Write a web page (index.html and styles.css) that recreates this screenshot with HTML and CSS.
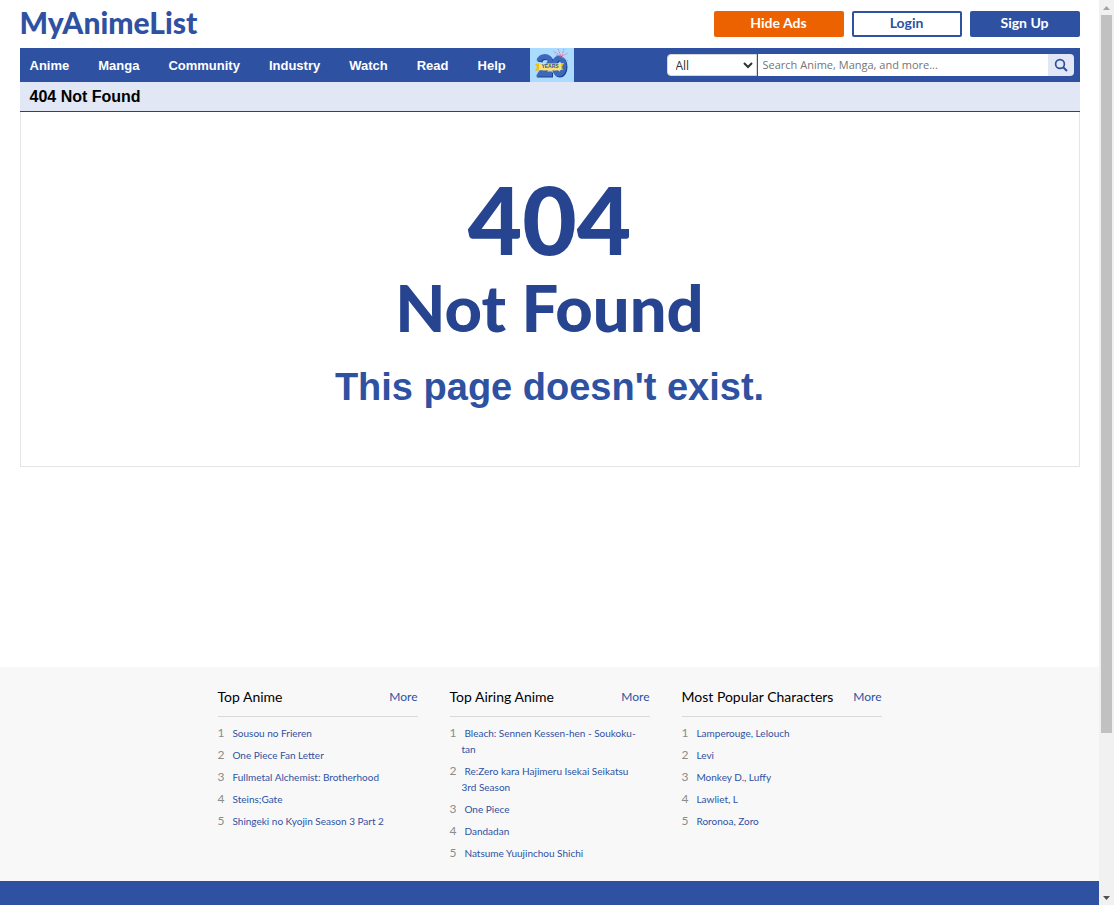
FILE: index.html
```
<!DOCTYPE html>
<html lang="en">
<head>
    <meta charset="UTF-8">
    <meta name="viewport" content="width=device-width, initial-scale=1.0">
    <title>404 Not Found - MyAnimeList.net</title>
    <link rel="stylesheet" href="styles.css">
</head>
<body>
    <div class="page">
        <!-- Logo and account buttons -->
        <header class="header wrapper">
            <a href="#" class="logo">MyAnimeList</a>
            <div class="header-buttons">
                <button type="button" class="btn btn-ads">Hide Ads</button>
                <button type="button" class="btn btn-login">Login</button>
                <button type="button" class="btn btn-signup">Sign Up</button>
            </div>
        </header>

        <!-- Menu -->
        <div class="menu wrapper">
            <nav class="nav">
                <a href="#">Anime</a>
                <a href="#">Manga</a>
                <a href="#">Community</a>
                <a href="#">Industry</a>
                <a href="#">Watch</a>
                <a href="#">Read</a>
                <a href="#">Help</a>
            </nav>
            <a href="#" class="anniversary" aria-label="20 years">
                <svg width="44" height="34" viewBox="0 0 44 34">
                    <g fill="none" stroke="#243f83" stroke-width="5">
                        <path d="M10 14C11 8 21 8 21 14C21 18 14 21 11 27H23"/>
                        <ellipse cx="30" cy="19" rx="5" ry="8"/>
                    </g>
                    <g fill="none" stroke="#3c68bd" stroke-width="5">
                        <path d="M9 13C10 7 20 7 20 13C20 17 13 20 10 26H22"/>
                        <ellipse cx="29" cy="18" rx="5" ry="8"/>
                    </g>
                    <path d="M5 16L11 15V22L5 23L7 19ZM28 15L34 15L32 19L33 22L28 22Z" fill="#eebf12"/>
                    <path d="M9 15Q20 16 31 15V22Q20 23 9 22Z" fill="#fbe16d"/>
                    <text x="20" y="20" class="anniversary-text">YEARS</text>
                    <g stroke="#e9799f" stroke-width="1" stroke-dasharray="2 1">
                        <path d="M31 8L23 3M31 8L28 1M32 8L34 1M32 8L38 5M32 9L38 13M31 8L25 7"/>
                    </g>
                </svg>
            </a>
            <form class="search">
                <select class="search-type" aria-label="Category">
                    <option>All</option>
                    <option>Anime</option>
                    <option>Manga</option>
                    <option>Characters</option>
                </select>
                <input type="text" class="search-input" placeholder="Search Anime, Manga, and more..." aria-label="Search">
                <button type="submit" class="search-btn" aria-label="Search">
                    <svg width="14" height="14" viewBox="0 0 14 14" fill="none" stroke="#2e51a2">
                        <circle cx="6" cy="6" r="4.4" stroke-width="1.7"/>
                        <path d="M9.2 9.2L13 13" stroke-width="2"/>
                    </svg>
                </button>
            </form>
        </div>

        <!-- Content -->
        <main class="content wrapper">
            <h1 class="title">404 Not Found</h1>
            <div class="error">
                <div class="error-code">404</div>
                <div class="error-name">Not Found</div>
                <p class="error-text">This page doesn't exist.</p>
            </div>
        </main>

        <!-- Rankings -->
        <section class="rankings">
            <div class="ranking">
                <div class="ranking-head">
                    <h2>Top Anime</h2>
                    <a href="#">More</a>
                </div>
                <ol>
                    <li><span>1</span><a href="#">Sousou no Frieren</a></li>
                    <li><span>2</span><a href="#">One Piece Fan Letter</a></li>
                    <li><span>3</span><a href="#">Fullmetal Alchemist: Brotherhood</a></li>
                    <li><span>4</span><a href="#">Steins;Gate</a></li>
                    <li><span>5</span><a href="#">Shingeki no Kyojin Season 3 Part 2</a></li>
                </ol>
            </div>
            <div class="ranking">
                <div class="ranking-head">
                    <h2>Top Airing Anime</h2>
                    <a href="#">More</a>
                </div>
                <ol>
                    <li><span>1</span><a href="#">Bleach: Sennen Kessen-hen - Soukoku-tan</a></li>
                    <li><span>2</span><a href="#">Re:Zero kara Hajimeru Isekai Seikatsu 3rd Season</a></li>
                    <li><span>3</span><a href="#">One Piece</a></li>
                    <li><span>4</span><a href="#">Dandadan</a></li>
                    <li><span>5</span><a href="#">Natsume Yuujinchou Shichi</a></li>
                </ol>
            </div>
            <div class="ranking">
                <div class="ranking-head">
                    <h2>Most Popular Characters</h2>
                    <a href="#">More</a>
                </div>
                <ol>
                    <li><span>1</span><a href="#">Lamperouge, Lelouch</a></li>
                    <li><span>2</span><a href="#">Levi</a></li>
                    <li><span>3</span><a href="#">Monkey D., Luffy</a></li>
                    <li><span>4</span><a href="#">Lawliet, L</a></li>
                    <li><span>5</span><a href="#">Roronoa, Zoro</a></li>
                </ol>
            </div>
        </section>

        <footer class="footer"></footer>
    </div>

    <!-- Scrollbar -->
    <div class="scrollbar" aria-hidden="true">
        <svg width="15" height="15" viewBox="0 0 15 15"><path d="M4 10L7.500 6L11 10Z" fill="#a3a3a3"/></svg>
        <div class="scrollbar-track"><div class="scrollbar-thumb"></div></div>
        <svg width="15" height="15" viewBox="0 0 15 15"><path d="M4 6L7.500 10L11 6Z" fill="#505050"/></svg>
    </div>
</body>
</html>
```
FILE: styles.css
```
/* Reset and Base Styles */
* {
    margin: 0;
    padding: 0;
    box-sizing: border-box;
}
body {
    display: flex;
    min-height: 100vh;
    background-color: #fff;
    color: #000;
    font-family: "Liberation Sans", Arial, sans-serif;
}
a {
    color: #2e51a2;
    text-decoration: none;
}
.page {
    display: flex;
    flex-direction: column;
    flex: 1;
}
.wrapper {
    width: calc(100% - 39px);
    max-width: 1060px;
    margin: 0 auto;
}

/* Header */
.header {
    display: flex;
    justify-content: space-between;
    align-items: center;
    height: 48px;
}
.logo {
    font-family: Lato, sans-serif;
    font-size: 30px;
    font-weight: 900;
    line-height: 40px;
    padding-bottom: 4px;
}
.header-buttons {
    display: flex;
    gap: 8px;
}
.btn {
    width: 110px;
    height: 26px;
    padding-bottom: 2px;
    border: 2px solid #2e51a2;
    border-radius: 2px;
    background-color: #2e51a2;
    color: #fff;
    font-family: Lato, sans-serif;
    font-size: 14px;
    font-weight: bold;
    line-height: 20px;
    cursor: pointer;
}
.btn-ads {
    width: 130px;
    border-color: #ec6200;
    background-color: #ec6200;
}
.btn-login {
    background-color: #fff;
    color: #2e51a2;
}

/* Menu */
.menu {
    display: flex;
    align-items: center;
    height: 34px;
    padding-right: 6px;
    background-color: #2e51a2;
}
.nav {
    display: flex;
    gap: 29px;
    padding: 2px 24px 0 10px;
}
.nav a {
    color: #fff;
    font-size: 13px;
    font-weight: bold;
    line-height: 32px;
}
.anniversary {
    display: flex;
    background-color: #abdcff;
}
.anniversary-text {
    fill: #2e51a2;
    font-family: "Liberation Sans", Arial, sans-serif;
    font-size: 5px;
    font-weight: bold;
    text-anchor: middle;
}
.search {
    display: flex;
    width: 407px;
    height: 22px;
    margin-left: auto;
}
.search-type {
    width: 90px;
    margin-right: 1px;
    padding-left: 4px;
    border: 1px solid #d8d8d8;
    border-radius: 4px 0 0 4px;
    background-color: #fff;
    color: #323232;
    font-family: "Open Sans", sans-serif;
    font-size: 12px;
}
.search-input {
    flex: 1;
    min-width: 0;
    padding: 0 5px 2px;
    border: none;
    font-family: "Open Sans", sans-serif;
    font-size: 11px;
}
.search-input::placeholder {
    color: #757575;
}
.search-btn {
    display: flex;
    align-items: center;
    justify-content: center;
    width: 26px;
    border: none;
    border-radius: 0 4px 4px 0;
    background-color: #e1e7f5;
    cursor: pointer;
}

/* Content */
.title {
    padding: 0 10px;
    border-bottom: 1px solid #1c439b;
    background-color: #e1e7f5;
    font-size: 16px;
    line-height: 29px;
}
.error {
    min-height: 355px;
    padding-top: 52px;
    border: 1px solid #e5e5e5;
    border-top: none;
    text-align: center;
}
.error-code,
.error-name {
    color: #26448f;
    font-family: Lato, sans-serif;
    font-weight: 900;
}
.error-code {
    font-size: 94px;
    line-height: 110px;
}
.error-name {
    font-size: 65px;
    line-height: 66px;
}
.error-text {
    padding-top: 24px;
    color: #2e51a2;
    font-size: 38px;
    font-weight: bold;
    line-height: 46px;
}

/* Rankings */
.rankings {
    display: flex;
    justify-content: center;
    gap: 32px;
    min-height: 214px;
    margin-top: 200px;
    padding: 20px 0 12px;
    background-color: #f8f8f8;
    font-family: Lato, sans-serif;
}
.ranking {
    width: 200px;
}
.ranking-head {
    display: flex;
    justify-content: space-between;
    height: 30px;
    margin-bottom: 8px;
    border-bottom: 1px solid #d8d8d8;
    line-height: 20px;
}
.ranking-head h2 {
    font-size: 14px;
    font-weight: normal;
}
.ranking-head a {
    font-size: 12px;
}
.ranking ol {
    padding-right: 8px;
    list-style: none;
}
.ranking li {
    margin-bottom: 6px;
    padding-left: 12px;
    font-size: 10px;
    line-height: 16px;
    text-indent: -12px;
}
.ranking span {
    margin-right: 8px;
    color: #8c8c8c;
    font-size: 12px;
}

/* Footer */
.footer {
    flex: 1;
    min-height: 24px;
    background-color: #2e51a2;
}

/* Scrollbar */
.scrollbar {
    display: flex;
    flex-direction: column;
    position: sticky;
    top: 0;
    width: 15px;
    height: 100vh;
    background-color: #f1f1f1;
}
.scrollbar svg {
    display: block;
}
.scrollbar-track {
    flex: 1;
    padding: 0 2px;
}
.scrollbar-thumb {
    height: 82%;
    background-color: #c1c1c1;
}
```
